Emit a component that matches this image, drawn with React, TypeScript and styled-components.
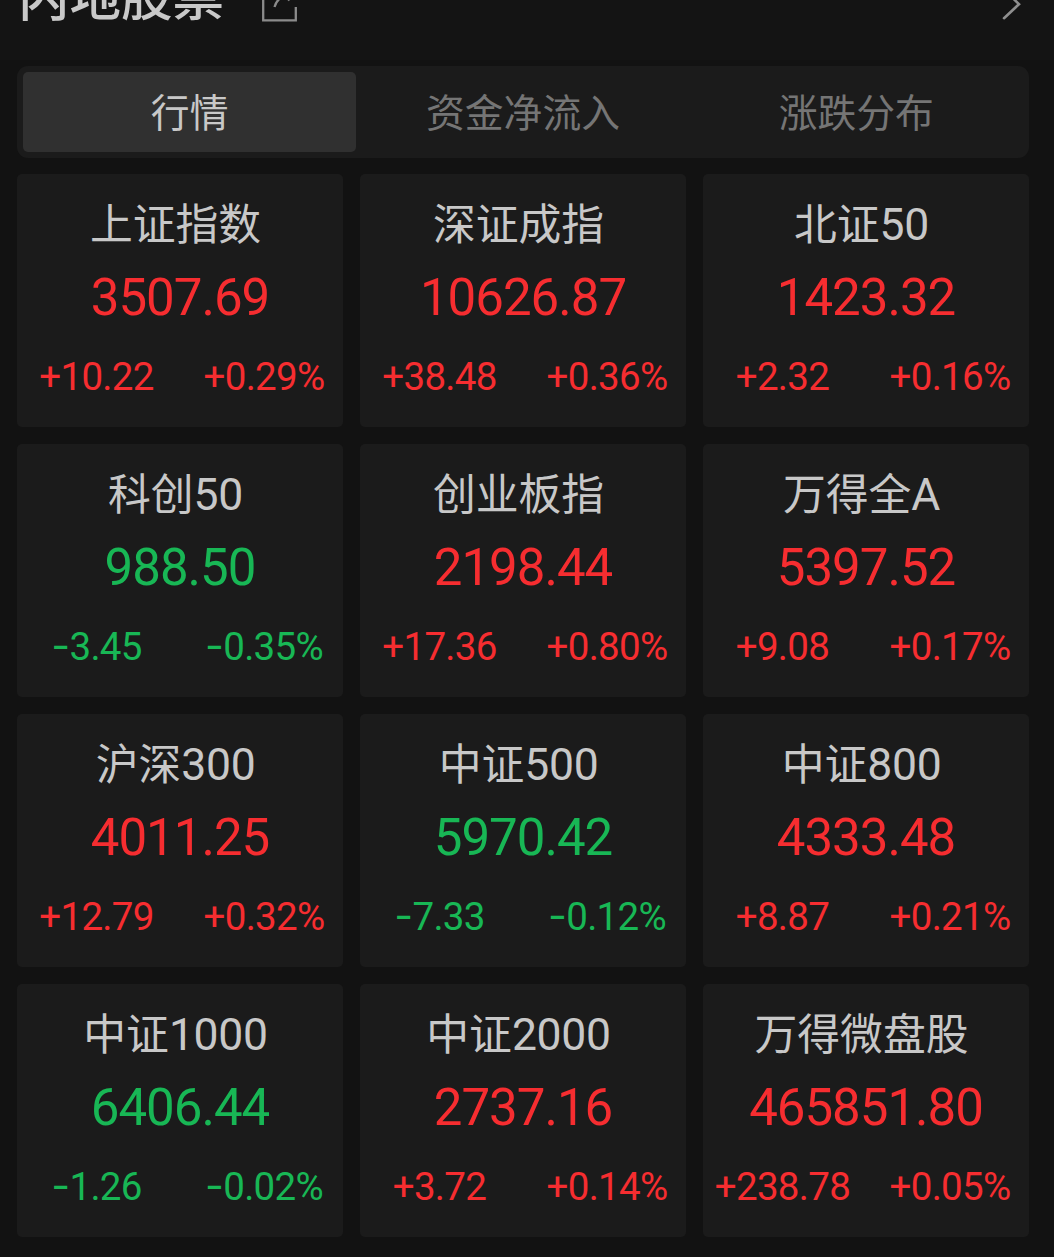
import React from 'react';
import styled, { createGlobalStyle } from 'styled-components';

const RISE = '#f62d30';
const FALL = '#18b755';

const Global = createGlobalStyle`
  *, *::before, *::after { box-sizing: border-box; }
  body {
    margin: 0;
    background: #121212;
    font-family: Roboto, 'Noto Sans CJK SC', sans-serif;
  }
`;

const Page = styled.main`
  width: 1054px;
  height: 1257px;
  overflow: hidden;
  background: #121212;
`;

const Header = styled.header`
  display: flex;
  align-items: flex-start;
  height: 60px;
  padding: 0 33px 0 18px;
  overflow: hidden;
  background: #141414;
`;

const Title = styled.h1`
  margin: -36px 0 0;
  font: 500 51.5px/60px 'Noto Sans CJK SC', sans-serif;
  color: #c9c9c9;
  white-space: nowrap;
`;

const ShareIcon = styled.svg`
  flex: none;
  margin: -16px 0 0 35px;
`;

const MoreIcon = styled.svg`
  flex: none;
  margin: -14px 0 0 auto;
`;

const Body = styled.div`
  padding: 6px 25px 0 17px;
`;

const Tabs = styled.nav`
  display: grid;
  grid-template-columns: repeat(3, 1fr);
  height: 92px;
  padding: 6px;
  border-radius: 11px;
  background: #1b1b1b;
`;

const Tab = styled.button<{ $active?: boolean }>`
  border: 0;
  padding: 0 0 4px;
  border-radius: 5px;
  background: ${p => (p.$active ? '#303030' : 'transparent')};
  color: ${p => (p.$active ? '#c8c8c8' : '#757575')};
  font: 400 38.8px/76px 'Noto Sans CJK SC', sans-serif;
  white-space: nowrap;
`;

const Grid = styled.section`
  display: grid;
  grid-template-columns: repeat(3, 326px);
  grid-auto-rows: 253px;
  gap: 17px;
  margin-top: 16px;
`;

const Card = styled.article`
  display: flex;
  flex-direction: column;
  padding-top: 21px;
  border-radius: 5px;
  background: #1b1b1b;
  text-align: center;
  white-space: nowrap;
`;

const Name = styled.h2`
  margin: 0;
  padding-right: 9px;
  font-size: 42.8px;
  font-weight: 400;
  line-height: 60px;
  color: #c8c8c8;
`;

const Digits = styled.span`
  font-size: 44.5px;
  letter-spacing: -0.3px;
`;

const Price = styled.div<{ $color: string }>`
  margin-top: 13px;
  font-size: 51px;
  line-height: 60px;
  letter-spacing: -1px;
  color: ${p => p.$color};
`;

const Changes = styled.div<{ $color: string }>`
  display: grid;
  grid-template-columns: 159px 156px;
  column-gap: 10px;
  margin-top: 24px;
  font-size: 38.5px;
  line-height: 50px;
  letter-spacing: -0.7px;
  color: ${p => p.$color};
`;

const Minus = styled.span`
  font-family: Inter, sans-serif;
  font-size: 41px;
  line-height: 0;
`;

type Quote = { name: string; code?: string; price: string; change: string; percent: string };

const quotes: Quote[] = [
  { name: '上证指数', price: '3507.69', change: '+10.22', percent: '+0.29%' },
  { name: '深证成指', price: '10626.87', change: '+38.48', percent: '+0.36%' },
  { name: '北证', code: '50', price: '1423.32', change: '+2.32', percent: '+0.16%' },
  { name: '科创', code: '50', price: '988.50', change: '-3.45', percent: '-0.35%' },
  { name: '创业板指', price: '2198.44', change: '+17.36', percent: '+0.80%' },
  { name: '万得全', code: 'A', price: '5397.52', change: '+9.08', percent: '+0.17%' },
  { name: '沪深', code: '300', price: '4011.25', change: '+12.79', percent: '+0.32%' },
  { name: '中证', code: '500', price: '5970.42', change: '-7.33', percent: '-0.12%' },
  { name: '中证', code: '800', price: '4333.48', change: '+8.87', percent: '+0.21%' },
  { name: '中证', code: '1000', price: '6406.44', change: '-1.26', percent: '-0.02%' },
  { name: '中证', code: '2000', price: '2737.16', change: '+3.72', percent: '+0.14%' },
  { name: '万得微盘股', price: '465851.80', change: '+238.78', percent: '+0.05%' },
];

const Signed = ({ value }: { value: string }) =>
  value.startsWith('-') ? (
    <span>
      <Minus>-</Minus>
      {value.slice(1)}
    </span>
  ) : (
    <span>{value}</span>
  );

const QuoteCard = ({ name, code, price, change, percent }: Quote) => {
  const color = change.startsWith('-') ? FALL : RISE;
  return (
    <Card>
      <Name>
        {name}
        {code && <Digits>{code}</Digits>}
      </Name>
      <Price $color={color}>{price}</Price>
      <Changes $color={color}>
        <Signed value={change} />
        <Signed value={percent} />
      </Changes>
    </Card>
  );
};

export default function App() {
  return (
    <>
      <Global />
      <Page>
        <Header>
          <Title>内地股票</Title>
          <ShareIcon width="40" height="40" viewBox="0 0 40 40" fill="none" stroke="#8b8b8b" strokeWidth="2.3">
            <path d="M17 3.5H4.2V36.3H36.8V23" />
            <path d="M15.5 23C17 17 21 11.5 34 8.5M26 3l9 5.5-6 8" />
          </ShareIcon>
          <MoreIcon width="20" height="36" viewBox="0 0 20 36" fill="none" stroke="#8f8f8f" strokeWidth="2.6" strokeLinecap="round">
            <path d="M3 3.5L18 18.2L3 32.2" />
          </MoreIcon>
        </Header>
        <Body>
          <Tabs>
            <Tab $active>行情</Tab>
            <Tab>资金净流入</Tab>
            <Tab>涨跌分布</Tab>
          </Tabs>
          <Grid>
            {quotes.map(q => (
              <QuoteCard key={q.name + (q.code ?? '')} {...q} />
            ))}
          </Grid>
        </Body>
      </Page>
    </>
  );
}
